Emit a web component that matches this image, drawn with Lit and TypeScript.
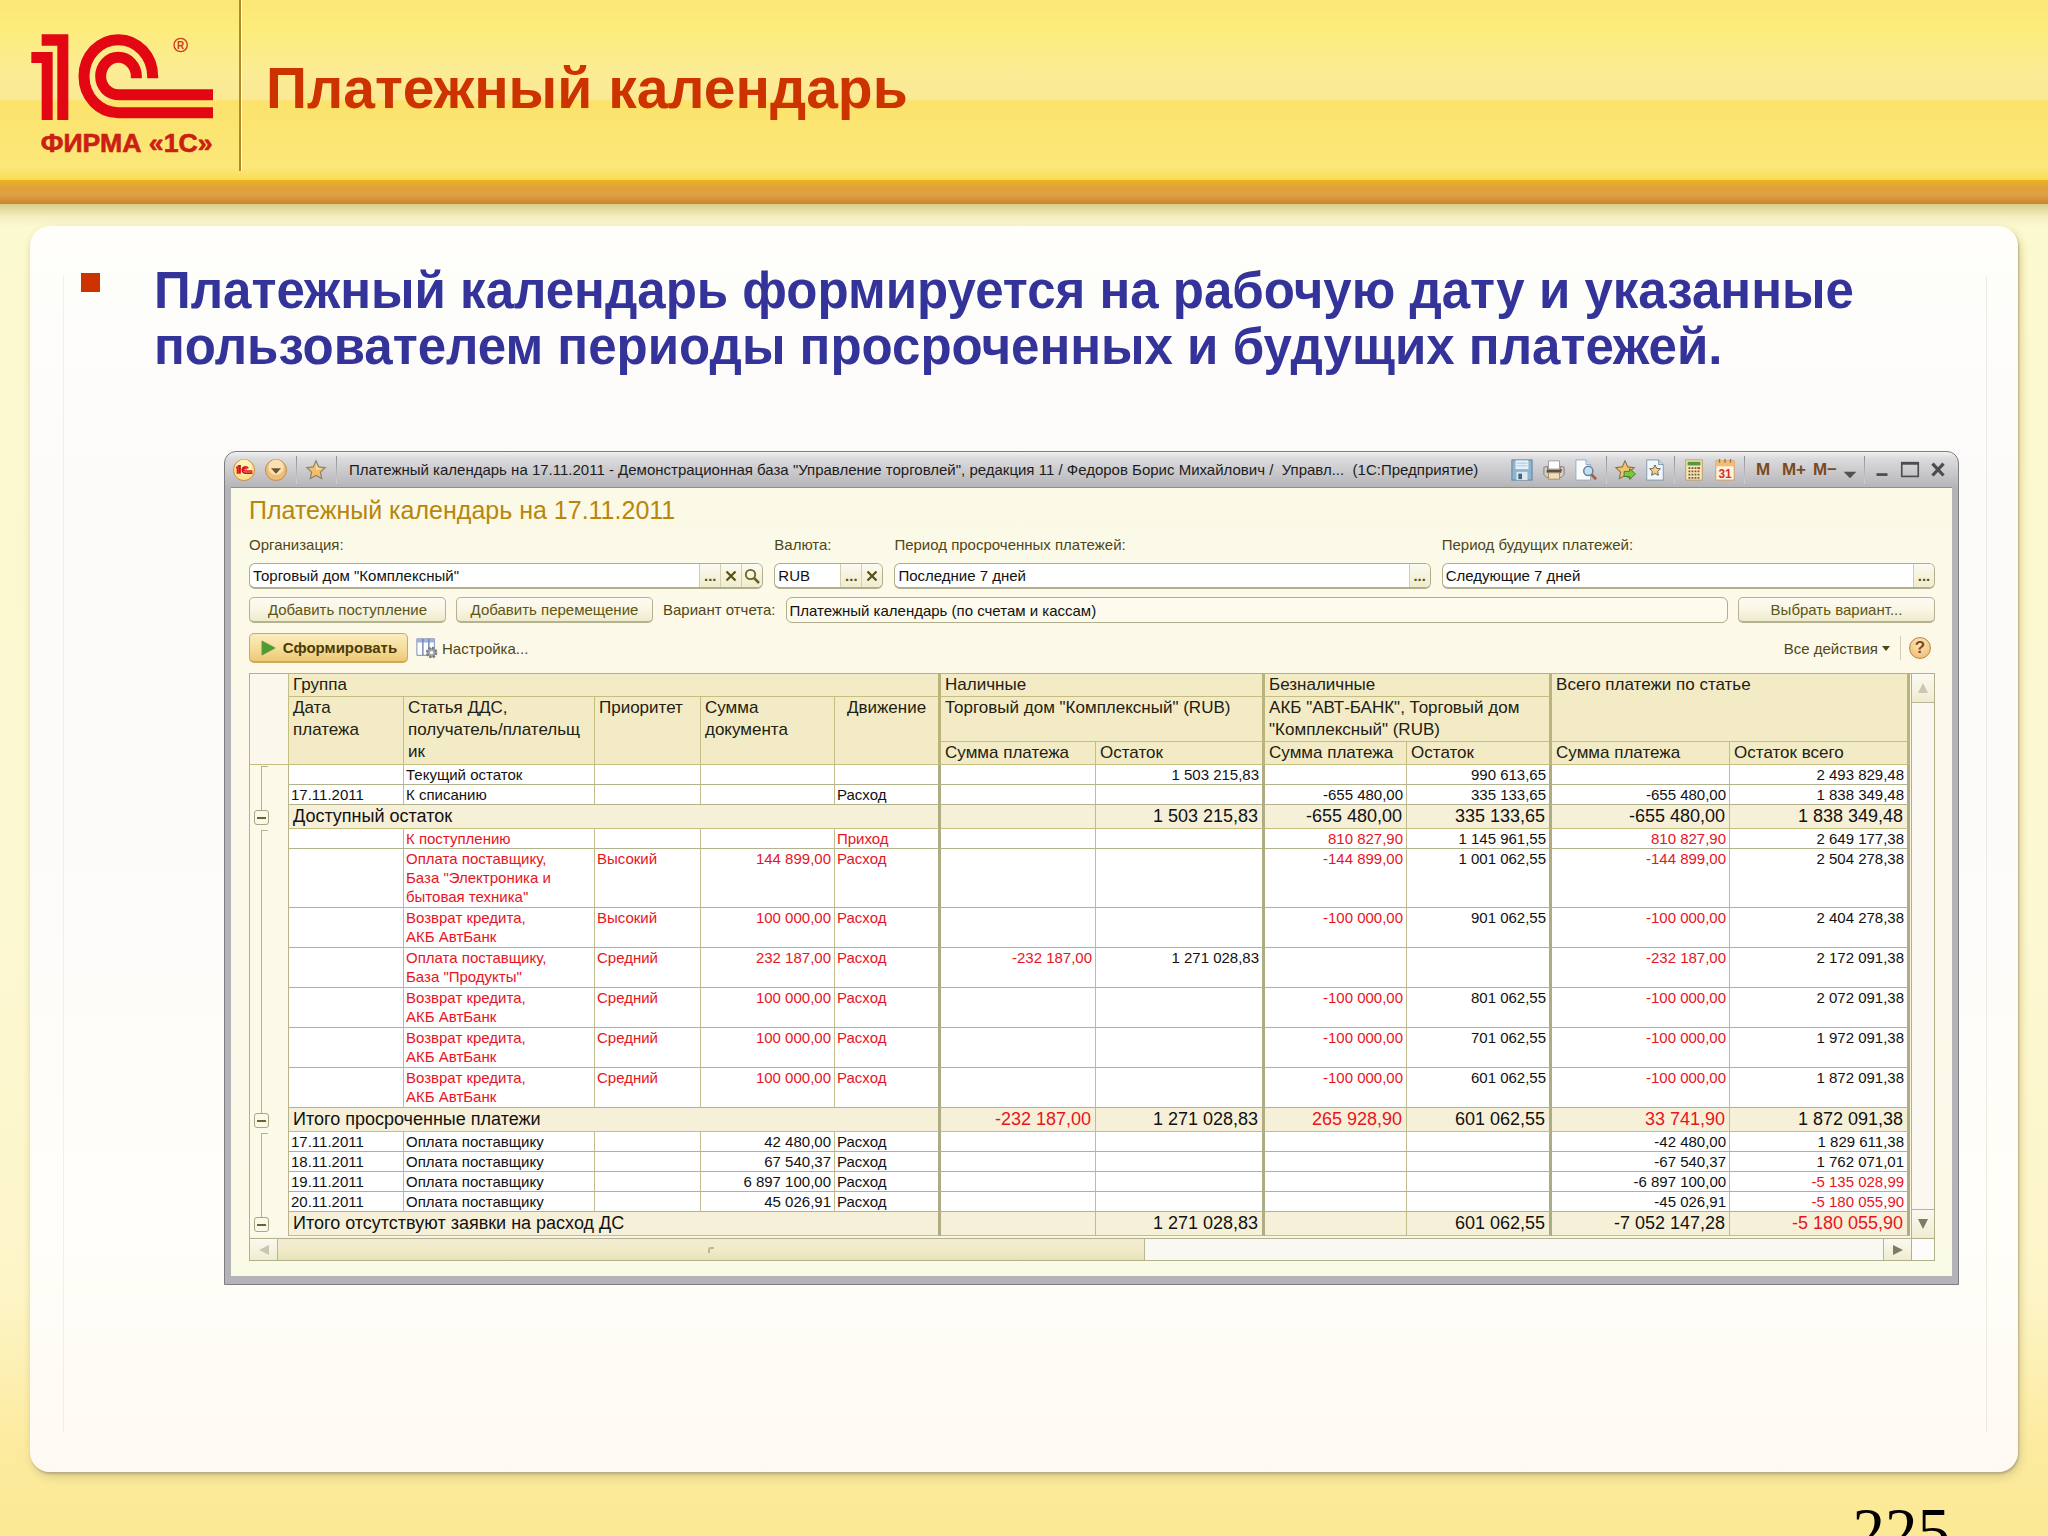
import { LitElement, html, svg, css, nothing, TemplateResult } from "lit";
import { customElement } from "lit/decorators.js";
import { classMap } from "lit/directives/class-map.js";

type RowKind = "small" | "double" | "triple" | "total";

interface Row {
  kind: RowKind;
  /** First row under a collapsible group bracket. */
  first?: boolean;
  /** A leading "!" marks a value printed in red; "\n" splits lines. */
  cells: string[];
}

const ROWS: Row[] = [
  { kind: "small", first: true, cells: ["", "Текущий остаток", "", "", "", "", "1 503 215,83", "", "990 613,65", "", "2 493 829,48"] },
  { kind: "small", cells: ["17.11.2011", "К списанию", "", "", "Расход", "", "", "-655 480,00", "335 133,65", "-655 480,00", "1 838 349,48"] },
  { kind: "total", cells: ["Доступный остаток", "", "1 503 215,83", "-655 480,00", "335 133,65", "-655 480,00", "1 838 349,48"] },
  { kind: "small", first: true, cells: ["", "!К поступлению", "", "", "!Приход", "", "", "!810 827,90", "1 145 961,55", "!810 827,90", "2 649 177,38"] },
  { kind: "triple", cells: ["", "!Оплата поставщику,\nБаза \"Электроника и\nбытовая техника\"", "!Высокий", "!144 899,00", "!Расход", "", "", "!-144 899,00", "1 001 062,55", "!-144 899,00", "2 504 278,38"] },
  { kind: "double", cells: ["", "!Возврат кредита,\nАКБ АвтБанк", "!Высокий", "!100 000,00", "!Расход", "", "", "!-100 000,00", "901 062,55", "!-100 000,00", "2 404 278,38"] },
  { kind: "double", cells: ["", "!Оплата поставщику,\nБаза \"Продукты\"", "!Средний", "!232 187,00", "!Расход", "!-232 187,00", "1 271 028,83", "", "", "!-232 187,00", "2 172 091,38"] },
  { kind: "double", cells: ["", "!Возврат кредита,\nАКБ АвтБанк", "!Средний", "!100 000,00", "!Расход", "", "", "!-100 000,00", "801 062,55", "!-100 000,00", "2 072 091,38"] },
  { kind: "double", cells: ["", "!Возврат кредита,\nАКБ АвтБанк", "!Средний", "!100 000,00", "!Расход", "", "", "!-100 000,00", "701 062,55", "!-100 000,00", "1 972 091,38"] },
  { kind: "double", cells: ["", "!Возврат кредита,\nАКБ АвтБанк", "!Средний", "!100 000,00", "!Расход", "", "", "!-100 000,00", "601 062,55", "!-100 000,00", "1 872 091,38"] },
  { kind: "total", cells: ["Итого просроченные платежи", "!-232 187,00", "1 271 028,83", "!265 928,90", "601 062,55", "!33 741,90", "1 872 091,38"] },
  { kind: "small", first: true, cells: ["17.11.2011", "Оплата поставщику", "", "42 480,00", "Расход", "", "", "", "", "-42 480,00", "1 829 611,38"] },
  { kind: "small", cells: ["18.11.2011", "Оплата поставщику", "", "67 540,37", "Расход", "", "", "", "", "-67 540,37", "1 762 071,01"] },
  { kind: "small", cells: ["19.11.2011", "Оплата поставщику", "", "6 897 100,00", "Расход", "", "", "", "", "-6 897 100,00", "!-5 135 028,99"] },
  { kind: "small", cells: ["20.11.2011", "Оплата поставщику", "", "45 026,91", "Расход", "", "", "", "", "-45 026,91", "!-5 180 055,90"] },
  { kind: "total", cells: ["Итого отсутствуют заявки на расход ДС", "", "1 271 028,83", "", "601 062,55", "-7 052 147,28", "!-5 180 055,90"] },
];

/** Columns after which a heavy rule closes a block. */
const BLOCK_ENDS = new Set([4, 6, 8, 10]);
const NUMERIC_FROM = 5;

const COLUMNS = ["c-gutter", "c-date", "c-item", "c-priority", "c-sum", "c-move", "c-cash", "c-cash-rest", "c-bank", "c-bank-rest", "c-all", "c-all-rest"];

const STAR = "M12 2l3 6.6 7 .8-5.2 4.9 1.4 7.1L12 17.9l-6.2 3.5 1.4-7.1L2 9.4l7-.8z";

const icon = (body: TemplateResult) =>
  html`<svg class="icon" viewBox="0 0 24 24" aria-hidden="true">${body}</svg>`;

const ICONS = {
  home: icon(svg`<circle cx="12" cy="12" r="11.5" fill="#fbe38c" stroke="#c9873a"/><circle cx="12" cy="9" r="8.5" fill="#fdf3b4"/>
    <path d="M3.4 9.2h1.7v7M7.500 16.2V7.600H5.200" fill="none" stroke="#d8141a" stroke-width="2.200"/>
    <path d="M16.6 10.3a3.5 3.5 0 1 0-3.700 5.100h8.400M14.600 11.4a1.500 1.500 0 1 0-1.600 1.600h8.200" fill="none" stroke="#d8141a" stroke-width="1.700"/>`),
  drop: icon(svg`<circle cx="12" cy="12" r="11.5" fill="#f0bd74" stroke="#b98a4c"/><circle cx="12" cy="9" r="8.5" fill="#fae1b4"/>
    <path d="M6.5 10h11L12 16z" fill="#6e5333"/>`),
  star: icon(svg`<path d="${STAR}" fill="#f3bf68" stroke="#8a8375" stroke-width="1.3"/><path d="M12 5l2 4.600 4.500.8-6.500 2z" fill="#fbe0a0"/>`),
  save: icon(svg`<rect x="1" y="1" width="22" height="22" fill="#8fb4cf" stroke="#55809c"/><rect x="5" y="1.500" width="14" height="9.500" fill="#e6f2f8"/>
    <path d="M6 4.500h12M6 7.500h12" stroke="#a3c4d6"/><rect x="6" y="14" width="12" height="9" fill="#dce8ee"/><rect x="8" y="16" width="4" height="6" fill="#41657e"/>`),
  print: icon(svg`<path d="M6 2h12v9H6z" fill="#fff" stroke="#98989c"/><path d="M1 9l4-1v4h14V8l4 1v8l-3 3H4l-3-3z" fill="#d6d1c8" stroke="#7d766c"/>
    <path d="M4 12h16v3H4z" fill="#5b5148"/><path d="M6 15h12v7H6z" fill="#f3dcb8" stroke="#a78a64"/><circle cx="20" cy="12" r="1" fill="#d8302a"/>`),
  preview: icon(svg`<path d="M1 1h11l5 5v17H1z" fill="#fafcfe" stroke="#8fabc0"/><path d="M12 1v5h5" fill="#cfe0ec" stroke="#8fabc0"/>
    <circle cx="14.500" cy="13" r="5" fill="#bfe0f4" stroke="#6b7f94" stroke-width="1.600"/><path d="M18 17l5 5" stroke="#a0643c" stroke-width="3"/>`),
  favAdd: icon(svg`<path d="${STAR}" fill="#f3c36e" stroke="#8a7350" stroke-width="1.200"/><path d="M11 13.500h6v-3l6.500 5.800-6.500 5.800v-3h-6z" fill="#7ac544" stroke="#3d7d22"/>`),
  favList: icon(svg`<path d="M3 1h13l5 5v17H3z" fill="#f2f7fb" stroke="#7b97ad"/><path d="M16 1v5h5" fill="#c7dae8" stroke="#7b97ad"/>
    <path d="M12 6.500l1.800 3.700 4.100.5-3 2.900.8 4.200-3.700-2-3.700 2 .8-4.200-3-2.900 4.100-.5z" fill="#f6cf86" stroke="#5e5a50"/>`),
  calc: icon(svg`<rect x="3" y="1" width="18" height="22" fill="#fbe6b9" stroke="#b89a62"/><rect x="5" y="3" width="14" height="4" fill="#4f9a3c"/>
    <path d="M6 10h12M6 13.500h12M6 17h12M6 20.500h12" stroke="#6e5a36" stroke-width="2" stroke-dasharray="2 1.300"/><path d="M16 10h2.500" stroke="#d33" stroke-width="2"/>`),
  calendar: icon(svg`<rect x="2" y="2" width="20" height="21" fill="#fff4e2" stroke="#d09a5c"/><rect x="2" y="2" width="20" height="6" fill="#f4bd76"/>
    <path d="M6 0v4M12 0v4M18 0v4" stroke="#a5713c" stroke-width="1.500"/><text x="12" y="20.500" text-anchor="middle" font-size="13" font-weight="700" fill="#d9301c">31</text>`),
  caret: icon(svg`<path d="M5 14h14l-7 7z" fill="#55504a"/>`),
  minimize: icon(svg`<path d="M6 17h12" stroke="#4c4c50" stroke-width="3"/>`),
  maximize: icon(svg`<rect x="3" y="4" width="18" height="15" fill="none" stroke="#4c4c50" stroke-width="1.800"/><path d="M3 5h18" stroke="#4c4c50" stroke-width="2.500"/>`),
  close: icon(svg`<path d="M6 5l12 13M18 5L6 18" stroke="#4c4c50" stroke-width="3.500"/>`),
  clear: html`<svg class="tiny" viewBox="0 0 12 12" aria-hidden="true"><path d="M1.500 1.500l9 9M10.500 1.500l-9 9" stroke="#5a5012" stroke-width="2.200"/></svg>`,
  search: html`<svg class="tiny wide" viewBox="0 0 16 16" aria-hidden="true"><circle cx="6.500" cy="6.500" r="4.700" fill="none" stroke="#6b6222" stroke-width="1.800"/><path d="M10 10l5 5" stroke="#6b6222" stroke-width="2.500"/></svg>`,
  play: html`<svg class="tiny wide" viewBox="0 0 16 16" aria-hidden="true"><path d="M2 1l13 7-13 7z" fill="#43a12c" stroke="#7c8a50"/></svg>`,
  settings: html`<svg class="icon" viewBox="0 0 24 24" aria-hidden="true"><path d="M1 2h19v18H1z" fill="#fff" stroke="#7084ac"/><path d="M1 2h19v4H1z" fill="#9db2dc"/>
    <path d="M7.500 2v18M14 2v18" stroke="#7084ac" stroke-width="1.500"/><circle cx="17" cy="17" r="5" fill="#a3a6ac" stroke="#777b82" stroke-width="2.500" stroke-dasharray="2.500 1.400"/><circle cx="17" cy="17" r="1.800" fill="#fff"/></svg>`,
};

const arrow = (d: string, fill: string) =>
  html`<svg class="tiny" viewBox="0 0 12 12" aria-hidden="true"><path d=${d} fill=${fill} /></svg>`;

const ARROW_MUTED = "#c9c6b4";
const ARROW_ACTIVE = "#7c7b66";
const ARROW_DARK = "#4f4718";

@customElement("app-root")
export class AppRoot extends LitElement {
  static styles = css`
    :host {
      display: flex;
      flex-direction: column;
      height: 100vh;
      overflow: hidden;
      font-family: "Liberation Sans", Arial, sans-serif;
      background: linear-gradient(#fbf9cf 203px, #fcf8d2 60%, #fdf5c8 84%, #fceb9f 94%, #fce995);
    }
    * { box-sizing: border-box; }
    button, input { font: inherit; color: inherit; margin: 0; }
    button { padding: 0; border: 0; background: none; cursor: pointer; }
    h1, h2, p, ul { margin: 0; padding: 0; }

    .masthead {
      display: flex;
      flex: none;
      height: 180px;
      background: linear-gradient(#fbe678, #fdec79 24px, #fcec94 70px, #fbe996 99px, #fbe36c 101px, #fbe77a 168px, #fbdd50);
    }
    .logo { display: block; flex: none; width: 240px; height: 180px; margin-right: -1px; }
    .divider { flex: none; width: 3px; height: 171px; background: #fffbe0; border-left: 2px solid #b08a2a; }
    .title { padding: 56px 0 0 24px; font-size: 57px; line-height: 64px; color: #cc3300; }
    .ribbon { flex: none; height: 24px; background: linear-gradient(#ebb31f, #dfa03c 9px, #e0a042 15px, #cb842c); }
    .ribbon-shade { flex: none; height: 22px; background: linear-gradient(#d8cd8a, #f3eebc 12px, #fbf8d0); }

    .card {
      flex: 1;
      min-height: 0;
      margin: 0 30px;
      padding: 37px 59px 0 194px;
      border-radius: 20px;
      background:
        linear-gradient(#f3efe8, #f3efe8) 33px 50px / 1px calc(100% - 90px) no-repeat,
        linear-gradient(#eceae2, #eceae2) calc(100% - 31px) 50px / 1px calc(100% - 90px) no-repeat,
        linear-gradient(#fefefa, #fdfbfa 20%, #fdfbfa 50%, #fffef8 80%, #fefaf3);
      box-shadow: 1px 2px 2px #b9ae84, 2px 5px 10px #d9c988;
    }
    .points { list-style: none; margin-left: -143px; margin-right: -40px; }
    .point { display: grid; grid-template-columns: 19px 1fr; column-gap: 54px; color: #333399; font-size: 51px; line-height: 56px; font-weight: 700; }
    .point::before { content: ""; height: 19px; margin-top: 10px; background: #cc3300; }

    .window {
      margin-top: 76px;
      padding: 0 6px 8px;
      border: 1px solid #7d7d82;
      border-radius: 12px 12px 0 0;
      background: linear-gradient(#f2f2f2, #dcdcde 6px, #b4b4b8 36px, #b4b4b8);
      font-size: 15px;
      color: #111;
    }
    .titlebar { display: flex; align-items: center; height: 35px; margin-left: -3px; }
    .caption { flex: 1; min-width: 0; padding-left: 9px; white-space: pre; overflow: hidden; color: #1c1c1c; }
    .tool { display: flex; align-items: center; justify-content: center; flex: none; width: 30px; height: 30px; font-weight: 700; font-size: 17px; color: #7a4a22; }
    .tool.wide { width: 32px; }
    .tool.mid { width: 28px; }
    .tool.slim { width: 20px; }
    .icon { width: 22px; height: 22px; display: block; flex: none; }
    .tiny { width: 12px; height: 12px; display: block; flex: none; }
    .tiny.wide { width: 16px; height: 16px; }
    .rule { flex: none; width: 8px; height: 28px; background: linear-gradient(#8e8e92, #d2d2d4) 4px 0 / 1px 100% no-repeat; }

    .client { padding: 7px 17px 15px 18px; background: linear-gradient(#fbfae6, #fdf9ea 25%, #fcf9ea 70%, #fafbe6); border-top: 1px solid #8f8f90; }
    .heading { font-size: 25px; line-height: 30px; font-weight: 400; color: #b8860b; }
    .fields { display: grid; grid-template-columns: 514fr 109fr 536fr 493fr; column-gap: 11px; margin-top: 10px; }
    .field { display: grid; row-gap: 8px; min-width: 0; }
    .label { line-height: 20px; color: #4f4718; white-space: nowrap; }
    .box { display: flex; height: 26px; min-width: 0; overflow: hidden; border: 1px solid #b0ae8c; border-bottom-width: 2px; border-radius: 6px; background: #fff; }
    .box.plain { flex: 1; background: #fdfbee; border-bottom-width: 1px; }
    .entry { flex: 1; width: 0; min-width: 0; border: 0; outline: 0; padding: 0 3px; background: transparent; color: #111; }
    .pick { display: flex; align-items: center; justify-content: center; flex: none; width: 21px; border-left: 1px solid #d2cfae; background: linear-gradient(#fbfaf0, #efecce); color: #5a5012; font-weight: 700; line-height: 16px; }

    .line { display: flex; align-items: center; gap: 10px; margin-top: 8px; }
    .line.actions { margin-top: 10px; gap: 8px; }
    .push { flex: none; width: 197px; height: 26px; border: 1px solid #b5b292; border-bottom-width: 2px; border-radius: 5px; background: linear-gradient(#fdfcf4, #f8f6e4 50%, #eeebce); color: #5f5414; }
    .run { display: flex; align-items: center; justify-content: center; gap: 7px; width: 159px; height: 30px; border: 1px solid #cfa95a; border-bottom-width: 2px; border-radius: 5px; background: linear-gradient(#fbedc0, #f5dc98 55%, #ecc877); font-weight: 700; color: #4a3c08; }
    .link { display: flex; align-items: center; gap: 4px; color: #4f4718; }
    .link.menu { gap: 2px; }
    .spacer { flex: 1; }
    .stroke { width: 1px; height: 24px; background: #cfccb0; }
    .help { width: 22px; height: 22px; margin-right: 4px; border: 1px solid #b58a50; border-radius: 50%; background: radial-gradient(circle at 50% 30%, #fde9c2, #f0b464); color: #7a4c1c; font-weight: 700; font-size: 17px; line-height: 20px; }

    .sheet { display: grid; grid-template-columns: 1fr 23px; grid-template-rows: auto 22px; margin-top: 10px; border: 1px solid #b3b08c; background: #fbf9f0; }
    .area { min-width: 0; padding: 0 2px 2px 0; background: #fbf5e4; }
    .grid { width: 100%; table-layout: fixed; border-collapse: separate; border-spacing: 0; font-size: 15px; line-height: 19px; background: #fff; }
    .c-gutter { width: 39px; }
    .c-date { width: 115px; }
    .c-item { width: 191px; }
    .c-priority { width: 106px; }
    .c-sum { width: 134px; }
    .c-move { width: 106px; }
    .c-cash { width: 155px; }
    .c-cash-rest { width: 169px; }
    .c-bank { width: 142px; }
    .c-bank-rest { width: 145px; }
    .c-all { width: 178px; }
    .c-all-rest { width: 180px; }

    .head { padding: 0 4px; vertical-align: top; text-align: left; font-weight: 400; font-size: 17px; line-height: 22px; background: #f3ebc6; border-right: 1px solid #c6bd80; border-bottom: 1px solid #c6bd80; color: #222010; white-space: nowrap; }
    .head.heavy { border-right: 3px solid #b9b37c; }
    .head.centred { text-align: center; }
    .head.corner { background: #fcf7ec; }
    .r-top { height: 23px; }
    .r-mid { height: 45px; }
    .r-low { height: 23px; }

    .cell { padding: 0 3px 0 2px; vertical-align: top; border-right: 1px solid #c0bc8e; border-bottom: 1px solid #b3b28e; white-space: pre; overflow: hidden; color: #111; }
    .cell.num { text-align: right; }
    .cell.heavy { border-right: 3px solid #aeac82; }
    .cell.red { color: #e8141e; }
    .small { height: 20px; }
    .double { height: 40px; }
    .triple { height: 59px; }
    .total { height: 24px; font-size: 18px; line-height: 23px; }
    .total .cell { background: #f7f0d8; padding: 0 4px; border-bottom-color: #c6bd80; }
    .gutter { padding: 0; vertical-align: top; border-right: 1px solid #b9b48c; background: linear-gradient(#b5b294, #b5b294) 11px 0 / 1px 100% no-repeat #fbf9e8; }
    .gutter.first { background: linear-gradient(#b5b294, #b5b294) 11px 1px / 7px 1px no-repeat, linear-gradient(#b5b294, #b5b294) 11px 1px / 1px 100% no-repeat #fbf9e8; }
    .total .gutter { background: linear-gradient(#b5b294, #b5b294) 11px 0 / 1px 6px no-repeat #fbf9e8; }
    .fold { display: flex; align-items: center; justify-content: center; width: 15px; height: 15px; margin: 5px 0 0 4px; border: 1px solid #a9a684; border-radius: 3px; background: #fbf9e8; }
    .fold::before { content: ""; width: 9px; height: 2px; background: #6b6430; }

    .vbar { display: flex; flex-direction: column; justify-content: space-between; border-left: 1px solid #b3b08c; background: #faf8f0; }
    .hbar { display: flex; border-top: 1px solid #b3b08c; background: #faf8f2; }
    .nudge { display: flex; align-items: center; justify-content: center; flex: none; width: 28px; background: linear-gradient(#fbf9f0, #efecd2); border: 0 solid #b9b695; }
    .nudge.up { width: auto; height: 29px; border-bottom-width: 1px; }
    .nudge.down { width: auto; height: 29px; border-top-width: 1px; }
    .nudge.left { border-right-width: 1px; }
    .nudge.right { border-left-width: 1px; }
    .track { flex: 1; display: flex; }
    .thumb { width: 54%; display: flex; align-items: center; justify-content: center; border-right: 1px solid #b9b695; background: linear-gradient(#f5ebd6, #f1ebc8 50%, #e6e3b8); }
    .grip { width: 6px; height: 6px; border: solid #bdb98f; border-width: 2px 0 0 2px; border-radius: 3px 0 0 0; }
    .nook { border-top: 1px solid #b3b08c; border-left: 1px solid #b3b08c; background: #fdfcfa; }

    .footer { flex: none; height: 64px; padding: 27px 98px 0 0; overflow: hidden; text-align: right; font-family: "Liberation Serif", "Times New Roman", serif; font-size: 65px; line-height: 64px; color: #000; }
  `;

  private tool(label: string, body: unknown, size = "") {
    return html`<button class="tool ${size}" aria-label=${label}>${body}</button>`;
  }

  private field(id: string, label: string, value: string, picks: [string, unknown][]) {
    return html`<div class="field">
      <label class="label" for=${id}>${label}</label>
      <div class="box">
        <input class="entry" id=${id} .value=${value} />
        ${picks.map(([name, body]) => html`<button class="pick" aria-label=${name}>${body}</button>`)}
      </div>
    </div>`;
  }

  private row(r: Row) {
    const total = r.kind === "total";
    return html`<tr class=${r.kind}>
      <td class=${classMap({ gutter: true, first: !!r.first })}>
        ${total ? html`<button class="fold" aria-label="Свернуть"></button>` : nothing}
      </td>
      ${r.cells.map((raw, i) => {
        const col = total ? i + 4 : i;
        const span = total && i === 0;
        const red = raw.startsWith("!");
        const classes = {
          cell: true,
          red,
          heavy: BLOCK_ENDS.has(col),
          num: !span && (col >= NUMERIC_FROM || col === 3),
        };
        return html`<td class=${classMap(classes)} colspan=${span ? 5 : 1}>${red ? raw.slice(1) : raw}</td>`;
      })}
    </tr>`;
  }

  private table() {
    return html`<table class="grid">
      <colgroup>${COLUMNS.map((c) => html`<col class=${c} />`)}</colgroup>
      <thead>
        <tr class="r-top">
          <td class="head corner" rowspan="3"></td>
          <th class="head heavy" colspan="5">Группа</th>
          <th class="head heavy" colspan="2">Наличные</th>
          <th class="head heavy" colspan="2">Безналичные</th>
          <th class="head heavy" colspan="2" rowspan="2">Всего платежи по статье</th>
        </tr>
        <tr class="r-mid">
          <th class="head" rowspan="2">Дата<br />платежа</th>
          <th class="head" rowspan="2">Статья ДДС,<br />получатель/плательщ<br />ик</th>
          <th class="head" rowspan="2">Приоритет</th>
          <th class="head" rowspan="2">Сумма<br />документа</th>
          <th class="head heavy centred" rowspan="2">Движение</th>
          <th class="head heavy" colspan="2">Торговый дом "Комплексный" (RUB)</th>
          <th class="head heavy" colspan="2">АКБ "АВТ-БАНК", Торговый дом<br />"Комплексный" (RUB)</th>
        </tr>
        <tr class="r-low">
          <th class="head">Сумма платежа</th>
          <th class="head heavy">Остаток</th>
          <th class="head">Сумма платежа</th>
          <th class="head heavy">Остаток</th>
          <th class="head">Сумма платежа</th>
          <th class="head heavy">Остаток всего</th>
        </tr>
      </thead>
      <tbody>${ROWS.map((r) => this.row(r))}</tbody>
    </table>`;
  }

  render() {
    return html`
      <header class="masthead">
        <svg class="logo" viewBox="0 0 720 540" role="img" aria-label="Фирма 1С">
          <path fill="#e30613" d="M125 103h80v257h-33V137h-47zM94 156h64v204h-33V189H94z" />
          <path fill="none" stroke="#e30613" stroke-width="33" d="M458 235v-6C458 168 412 119 355 119S252 168 252 229S298 338 355 338H639" />
          <path fill="none" stroke="#e30613" stroke-width="33" d="M409 235v-6C409 198 385 172 355 172S302 198 302 229S325 284 355 284H639" />
          <circle cx="542" cy="135" r="20" fill="none" stroke="#cf3a1a" stroke-width="4" />
          <text x="542" y="146" text-anchor="middle" font-size="30" font-weight="700" fill="#cf3a1a">R</text>
          <text x="122" y="457" font-size="80" font-weight="700" fill="#cc1f14" stroke="#cc1f14" stroke-width="2">ФИРМА «1С»</text>
        </svg>
        <div class="divider"></div>
        <h1 class="title">Платежный календарь</h1>
      </header>
      <div class="ribbon"></div>
      <div class="ribbon-shade"></div>

      <main class="card">
        <ul class="points">
          <li class="point">
            <span>Платежный календарь формируется на рабочую дату и указанные пользователем периоды просроченных и будущих платежей.</span>
          </li>
        </ul>

        <section class="window">
          <div class="titlebar">
            ${this.tool("Главное меню", ICONS.home, "wide")}
            ${this.tool("Сервис", ICONS.drop, "wide")}
            <span class="rule"></span>
            ${this.tool("Избранное", ICONS.star, "wide")}
            <span class="rule"></span>
            <span class="caption">Платежный календарь на 17.11.2011 - Демонстрационная база "Управление торговлей", редакция 11 / Федоров Борис Михайлович /  Управл...  (1С:Предприятие)</span>
            ${this.tool("Сохранить", ICONS.save, "wide")}
            ${this.tool("Печать", ICONS.print, "wide")}
            ${this.tool("Просмотр", ICONS.preview, "wide")}
            <span class="rule"></span>
            ${this.tool("Добавить в избранное", ICONS.favAdd)}
            ${this.tool("Список избранного", ICONS.favList)}
            <span class="rule"></span>
            ${this.tool("Калькулятор", ICONS.calc, "wide")}
            ${this.tool("Календарь", ICONS.calendar)}
            <span class="rule"></span>
            ${this.tool("M", "M")}
            ${this.tool("M+", "M+", "wide")}
            ${this.tool("M-", "M−")}
            ${this.tool("Еще", ICONS.caret, "slim")}
            <span class="rule"></span>
            ${this.tool("Свернуть", ICONS.minimize, "mid")}
            ${this.tool("Развернуть", ICONS.maximize, "mid")}
            ${this.tool("Закрыть", ICONS.close, "mid")}
          </div>

          <div class="client">
            <h2 class="heading">Платежный календарь на 17.11.2011</h2>
            <div class="fields">
              ${this.field("org", "Организация:", 'Торговый дом "Комплексный"', [["Выбрать", "..."], ["Очистить", ICONS.clear], ["Открыть", ICONS.search]])}
              ${this.field("currency", "Валюта:", "RUB", [["Выбрать", "..."], ["Очистить", ICONS.clear]])}
              ${this.field("overdue", "Период просроченных платежей:", "Последние 7 дней", [["Выбрать", "..."]])}
              ${this.field("future", "Период будущих платежей:", "Следующие 7 дней", [["Выбрать", "..."]])}
            </div>
            <div class="line">
              <button class="push">Добавить поступление</button>
              <button class="push">Добавить перемещение</button>
              <label class="label" for="variant">Вариант отчета:</label>
              <div class="box plain">
                <input class="entry" id="variant" readonly .value=${"Платежный календарь (по счетам и кассам)"} />
              </div>
              <button class="push">Выбрать вариант...</button>
            </div>
            <div class="line actions">
              <button class="run">${ICONS.play}Сформировать</button>
              <button class="link">${ICONS.settings}Настройка...</button>
              <span class="spacer"></span>
              <button class="link menu">Все действия${arrow("M2 4h8l-4 5z", ARROW_DARK)}</button>
              <span class="stroke"></span>
              <button class="help" aria-label="Справка">?</button>
            </div>

            <div class="sheet">
              <div class="area">${this.table()}</div>
              <div class="vbar">
                <button class="nudge up" aria-label="Вверх">${arrow("M1 11L6 1l5 10z", ARROW_MUTED)}</button>
                <button class="nudge down" aria-label="Вниз">${arrow("M1 1h10L6 11z", ARROW_ACTIVE)}</button>
              </div>
              <div class="hbar">
                <button class="nudge left" aria-label="Влево">${arrow("M11 1v10L1 6z", ARROW_MUTED)}</button>
                <div class="track"><div class="thumb"><span class="grip"></span></div></div>
                <button class="nudge right" aria-label="Вправо">${arrow("M1 1l10 5-10 5z", ARROW_ACTIVE)}</button>
              </div>
              <div class="nook"></div>
            </div>
          </div>
        </section>
      </main>
      <footer class="footer">225</footer>
    `;
  }
}
